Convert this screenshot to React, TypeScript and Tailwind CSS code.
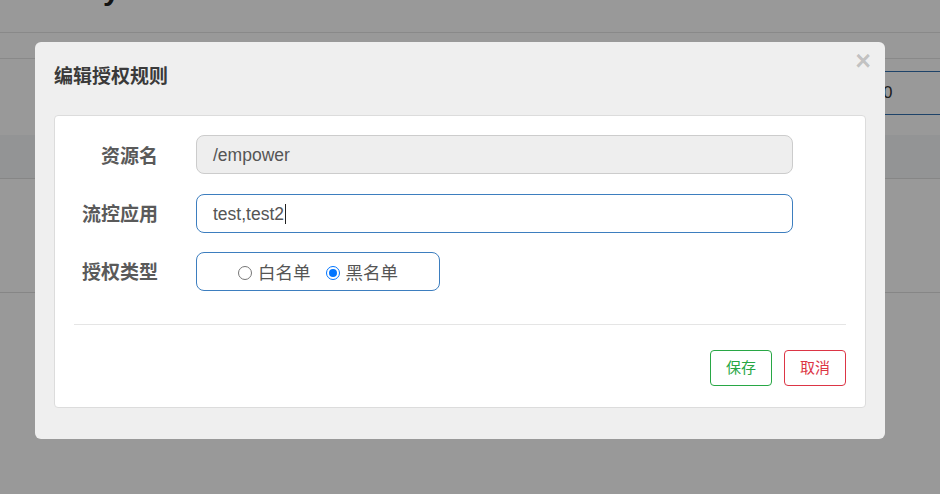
import React from "react";

export default function App() {
  const font = { fontFamily: '"Liberation Sans", "Noto Sans CJK SC", sans-serif' };
  return (
    <div className="relative w-[940px] h-[494px] overflow-hidden bg-white" style={font}>
      {/* background page */}
      <div className="flex flex-col">
        <div className="h-[33px] border-b border-[#e5e5e5] overflow-hidden">
          <div className="ml-[103px] mt-[-28px] text-[30px] font-bold leading-[36px] text-[#222]">y</div>
        </div>
        <div className="h-[26px] border-b border-[#e5e5e5]"></div>
        <div className="h-[76px] flex items-start justify-end">
          <div className="mt-[12px] w-[60px] h-[44px] border-y border-[#3370b0] flex items-center pl-[3px] text-[17px] text-[#333]">
            0
          </div>
        </div>
        <div className="h-[44px] bg-[#f5f7f9] border-b border-[#e0e0e0]"></div>
        <div className="h-[114px] border-b border-[#e0e0e0]"></div>
      </div>

      {/* backdrop */}
      <div className="absolute inset-0 bg-black/40"></div>

      {/* modal */}
      <div className="absolute left-[35px] top-[42px] w-[850px] h-[397px] rounded-[6px] bg-[#efefef] flex flex-col">
        <div className="relative px-[19px] pt-[21px] h-[73px]">
          <div className="text-[19px] font-bold leading-[27px] text-[#3a3a3a]">编辑授权规则</div>
          <div className="absolute right-[14px] top-[3px] text-[27px] font-bold leading-[32px] text-black/20">×</div>
        </div>
        <div className="ml-[19px] w-[812px] h-[293px] rounded-[4px] border border-[#dcdcdc] bg-white pl-[19px] pr-[19px] pt-[19px] flex flex-col">
          <div className="flex items-center h-[39px] mb-[20px]">
            <div className="w-[84px] pt-[5px] text-right text-[19px] font-bold text-[#5a5a5a]">资源名</div>
            <div className="ml-[38px] w-[597px] h-[39px] rounded-[8px] border border-[#cccccc] bg-[#eeeeee] pl-[16px] pt-[1px] flex items-center text-[17.5px] text-[#555]">
              /empower
            </div>
          </div>
          <div className="flex items-center h-[39px] mb-[19px]">
            <div className="w-[84px] pt-[4px] text-right text-[19px] font-bold text-[#5a5a5a]">流控应用</div>
            <div className="ml-[38px] w-[597px] h-[39px] rounded-[8px] border border-[#3d7ebf] bg-white pl-[16px] pt-[1px] flex items-center text-[17.5px] text-[#555]">
              test,test2
              <span className="ml-[1px] w-[1px] h-[20px] bg-[#222]"></span>
            </div>
          </div>
          <div className="flex items-center h-[39px]">
            <div className="w-[84px] pt-[4px] text-right text-[19px] font-bold text-[#5a5a5a]">授权类型</div>
            <div className="ml-[38px] w-[244px] h-[39px] rounded-[8px] border border-[#3d7ebf] bg-white pt-[3px] flex items-center justify-center text-[17.5px] text-[#555]">
              <span className="w-[14px] h-[14px] rounded-full border border-[#767676] bg-white"></span>
              <span className="ml-[6px]">白名单</span>
              <span className="ml-[15px] w-[14px] h-[14px] rounded-full border-[1.5px] border-[#0075ff] flex items-center justify-center">
                <span className="w-[8px] h-[8px] rounded-full bg-[#0075ff]"></span>
              </span>
              <span className="ml-[6px]">黑名单</span>
            </div>
          </div>
          <div className="mt-[33px] border-t border-[#e5e5e5]"></div>
          <div className="mt-[25px] flex justify-end gap-[12px]">
            <div className="w-[62px] h-[36px] rounded-[4px] border border-[#28a745] text-[#28a745] text-[15px] flex items-center justify-center">保存</div>
            <div className="w-[62px] h-[36px] rounded-[4px] border border-[#dc3545] text-[#dc3545] text-[15px] flex items-center justify-center">取消</div>
          </div>
        </div>
      </div>
    </div>
  );
}
